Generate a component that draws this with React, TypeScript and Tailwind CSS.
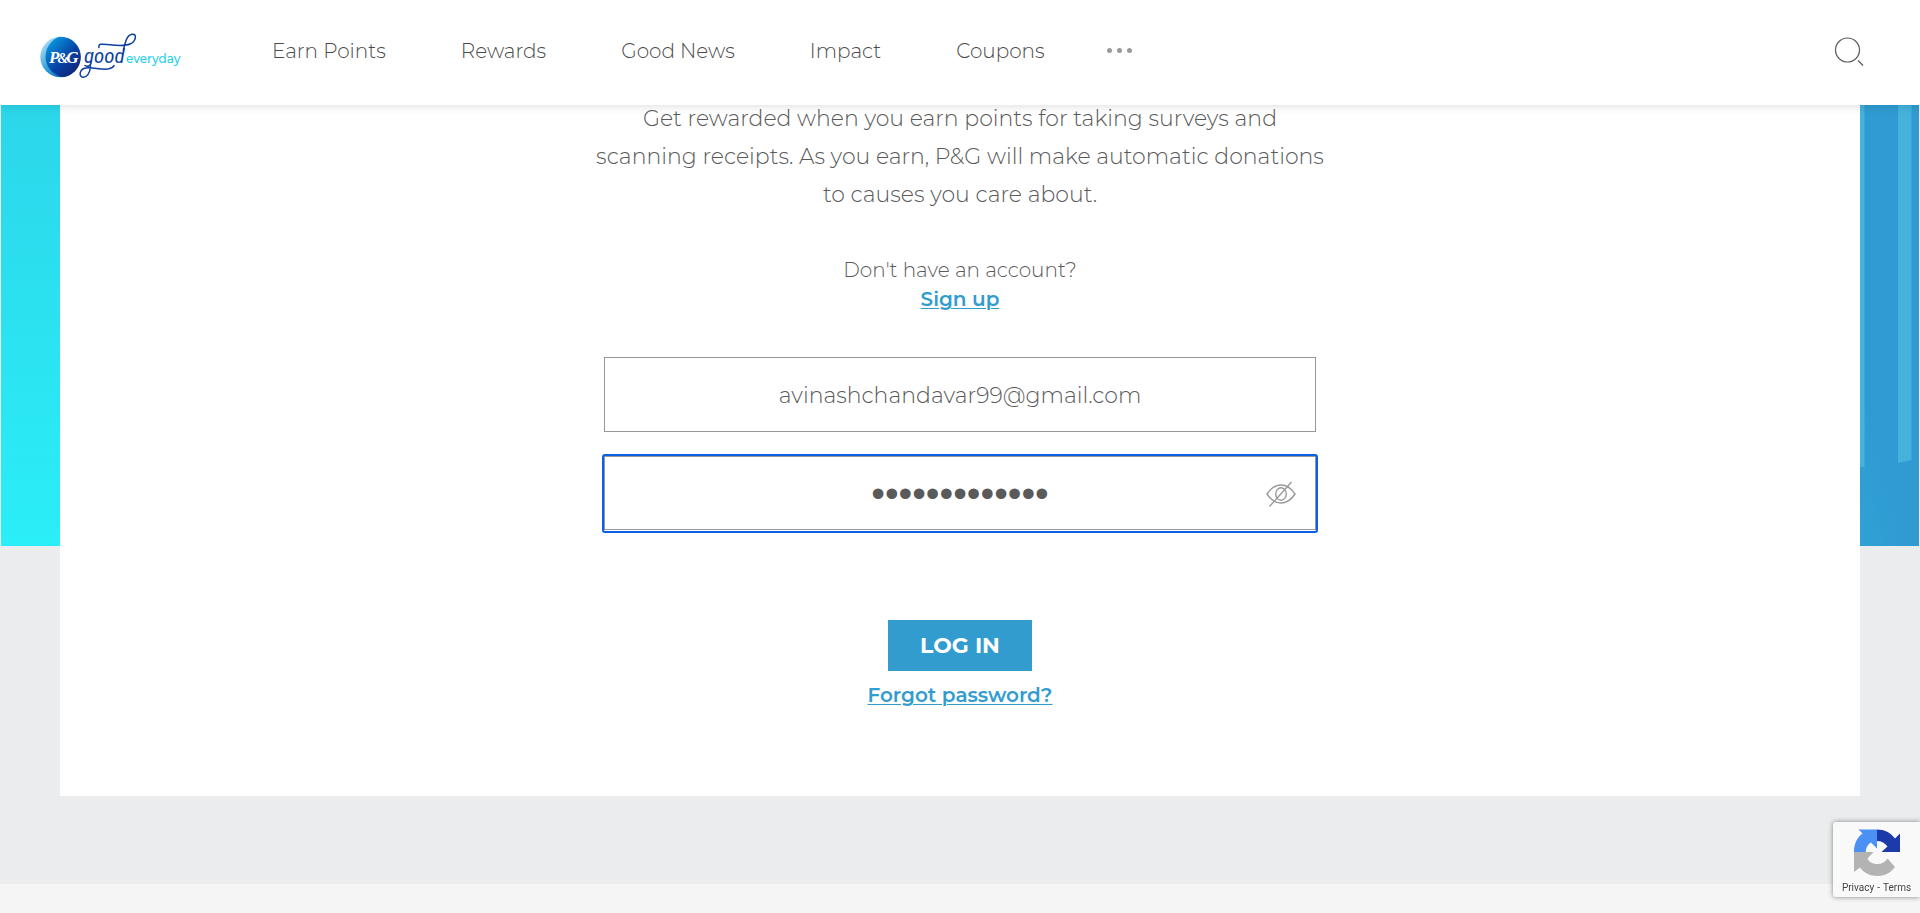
import { useState } from "react";

const navItems = ["Earn Points", "Rewards", "Good News", "Impact", "Coupons"];

function Logo() {
  return (
    <svg viewBox="0 0 144 50" className="h-[50px] w-36" role="img" aria-label="P&G Good Everyday">
      <defs>
        <linearGradient id="rim" x1="0" y1="0" x2="1" y2="1">
          <stop offset="0" stopColor="#d5effb" />
          <stop offset="0.5" stopColor="#2a9ad6" />
          <stop offset="1" stopColor="#0b4ea2" />
        </linearGradient>
        <linearGradient id="moon" x1="0.1" y1="0.1" x2="0.9" y2="0.9">
          <stop offset="0" stopColor="#0a9be0" />
          <stop offset="0.5" stopColor="#0545a8" />
          <stop offset="1" stopColor="#171a6b" />
        </linearGradient>
        <clipPath id="disc">
          <circle cx="20.500" cy="25" r="20.200" />
        </clipPath>
      </defs>
      <circle cx="20.500" cy="25" r="20.200" fill="url(#rim)" />
      <circle cx="26.500" cy="24.500" r="21" fill="url(#moon)" clipPath="url(#disc)" />
      <text x="9" y="31" fontFamily="'Liberation Serif', serif" fontStyle="italic" fontWeight="700" fontSize="17" fill="#fff">
        <tspan>P</tspan>
        <tspan dx="-2" fontSize="14">&amp;</tspan>
        <tspan dx="-2">G</tspan>
      </text>
      <text x="44" y="31" fontFamily="'Roboto Condensed', 'Liberation Sans', sans-serif" fontStyle="italic" fontSize="21" fill="#0b3fa0">
        good
      </text>
      <g fill="none" stroke="#0b3fa0" strokeWidth="1.500" strokeLinecap="round">
        <path d="M59 15.500C58 11.500 62 12 67 12.500C75 13.300 84 14.700 90 12C96 9.500 97.500 1.200 92 2.300C86.500 3.400 85 11 83.500 18" />
        <path d="M50.500 34C50 41 47 45.500 43 45.200C38.500 44.800 39.500 38 44.500 36.300C51 34 61 38.500 69 36.800C72 36 73.500 35 74 33.500" />
      </g>
      <text x="86" y="30.500" fontFamily="Montserrat, Lato, sans-serif" fontWeight="500" fontSize="12" fill="#25cfe8">
        everyday
      </text>
    </svg>
  );
}

function EyeOffIcon() {
  return (
    <svg viewBox="0 0 30 26" className="h-[26px] w-[30px]" fill="none" stroke="#9a9a9a" strokeWidth="1.400" aria-hidden="true">
      <path d="M1 13C5 7 9.500 4 15 4S25 7 29 13C25 19 20.500 22 15 22S5 19 1 13Z" />
      <ellipse cx="15" cy="13" rx="5.300" ry="6.200" />
      <path d="M3.500 25.500L25.500 1" />
    </svg>
  );
}

function RecaptchaIcon() {
  return (
    <svg viewBox="0 0 46 47" className="h-[47px] w-[46px] shrink-0" aria-hidden="true">
      <path fill="#1c3aa9" d="M23 .5C30.500 .5 36.500 3.500 41 9.500L46 4.500V23H27.500L33.500 17.500C31 14 27.500 12 23 12Z" />
      <path fill="#4a90f5" d="M4.500 .5H23V19.500L17 13.500C14 15 12 18.500 11.700 23H0C0 15 3 8.500 8.500 4.500Z" />
      <path
        fill="#b3b3b3"
        d="M0 23H19.500L13.500 29.500C15.500 33.500 19 35 23.500 35C28 35 31.500 33 33.500 29.500L41 38C36.500 44 30.500 47 23.500 47C16 47 10 44 6 38.500L0 43Z"
      />
    </svg>
  );
}

function Header() {
  return (
    <header className="z-10 flex h-[105px] items-center bg-white pr-14 pl-10 shadow-[0_0_10px_rgba(0,0,0,0.16)]">
      <a href="#home" className="mt-2">
        <Logo />
      </a>
      <nav className="ml-[88px] flex items-center gap-[75px] pb-1 text-xl font-light text-[#4a4a4a]">
        {navItems.map((item) => (
          <a key={item} href="#nav" className="whitespace-nowrap">
            {item}
          </a>
        ))}
      </nav>
      <button type="button" aria-label="More" className="mb-1 ml-[62px] flex gap-[5px]">
        <span className="size-[5px] rounded-full bg-[#9a9a9a]" />
        <span className="size-[5px] rounded-full bg-[#9a9a9a]" />
        <span className="size-[5px] rounded-full bg-[#9a9a9a]" />
      </button>
      <button type="button" aria-label="Search" className="mb-1 ml-auto">
        <svg viewBox="0 0 30 30" className="size-[30px]" fill="none" stroke="#5a5a5a" strokeWidth="1.200">
          <circle cx="13.500" cy="14" r="12" />
          <path d="M24 24.500l5 5" />
        </svg>
      </button>
    </header>
  );
}

function HeroBackground() {
  return (
    <div className="col-start-1 row-start-1 mx-px flex h-[441px] justify-between bg-[#2f9bd2]">
      <div className="w-[60px] bg-linear-to-b from-[#2cd6ea] to-[#2aeef8]" />
      <svg viewBox="0 0 60 441" className="h-[441px] w-[60px]" aria-hidden="true">
        <defs>
          <linearGradient id="sky" x1="0.5" y1="0" x2="0" y2="1">
            <stop offset="0.700" stopColor="#2f9bd2" />
            <stop offset="1" stopColor="#2fa2d5" />
          </linearGradient>
        </defs>
        <path d="M0 0H60V441H0Z" fill="url(#sky)" />
        <path d="M0 0H5.500V362H0Z" fill="#45b2dc" />
        <path d="M39 0H52.500V355L39 358Z" fill="#45b2dc" />
      </svg>
    </div>
  );
}

function LoginForm() {
  const [visible, setVisible] = useState(false);
  return (
    <form className="mt-[43px] flex flex-col items-center" onSubmit={(e) => e.preventDefault()}>
      <input
        type="email"
        aria-label="Email"
        defaultValue="avinashchandavar99@gmail.com"
        className="h-[75px] w-[712px] border border-[#979797] pt-0.5 text-center text-[22px] font-light text-[#5a5a5a] outline-none"
      />
      <div className="mt-6 flex h-[75px] w-[712px] rounded-[1px] pb-px outline-2 outline-[#0b5fe0]">
        <div className="flex flex-1 items-center border border-[#979797] pt-0.5 pr-[19px] pl-[49px]">
          <input
            type={visible ? "text" : "password"}
            aria-label="Password"
            defaultValue="abcdefghijklm"
            className="h-12 min-w-0 flex-1 text-center font-['Liberation_Sans',sans-serif] text-[39px] text-[#5a5a5a] outline-none"
          />
          <button type="button" aria-label="Show password" onClick={() => setVisible(!visible)}>
            <EyeOffIcon />
          </button>
        </div>
      </div>
      <button type="submit" className="mt-[89px] h-[51px] w-36 bg-[#339ccf] text-[22px] font-bold text-white">
        LOG IN
      </button>
      <a href="#forgot" className="mt-[9px] text-xl leading-[30px] font-semibold text-[#339ccf] underline decoration-1 underline-offset-2">
        Forgot password?
      </a>
    </form>
  );
}

export default function App() {
  return (
    <div className="flex min-h-screen flex-col bg-[#f5f5f5] font-['Montserrat','Inter',sans-serif]">
      <Header />
      <main className="grid bg-[#ebecee] pb-[88px]">
        <HeroBackground />
        <section className="col-start-1 row-start-1 mx-[60px] flex flex-col items-center bg-white pb-[86px] text-center text-[#5a5a5a]">
          <p className="-mt-[5px] w-[734px] text-[22px] leading-[38px] font-light">
            Get rewarded when you earn points for taking surveys and scanning receipts. As you earn, P&amp;G will make
            automatic donations to causes you care about.
          </p>
          <p className="mt-[42px] text-xl leading-[29px] font-light">Don&apos;t have an account?</p>
          <a href="#signup" className="text-xl leading-[29px] font-semibold text-[#339ccf] underline decoration-1 underline-offset-2">
            Sign up
          </a>
          <LoginForm />
        </section>
      </main>
      <aside className="fixed right-0 bottom-4 flex h-[75px] w-[87px] flex-col items-center overflow-hidden rounded-l-[3px] bg-[#f9f9f9] pt-[7px] shadow-[0_0_5px_gray]">
        <RecaptchaIcon />
        <div className="mt-0.5 flex gap-[3px] font-[Roboto,sans-serif] text-[10px] leading-[19px] text-[#444]">
          <a href="#privacy">Privacy</a>
          <span>-</span>
          <a href="#terms">Terms</a>
        </div>
      </aside>
    </div>
  );
}
